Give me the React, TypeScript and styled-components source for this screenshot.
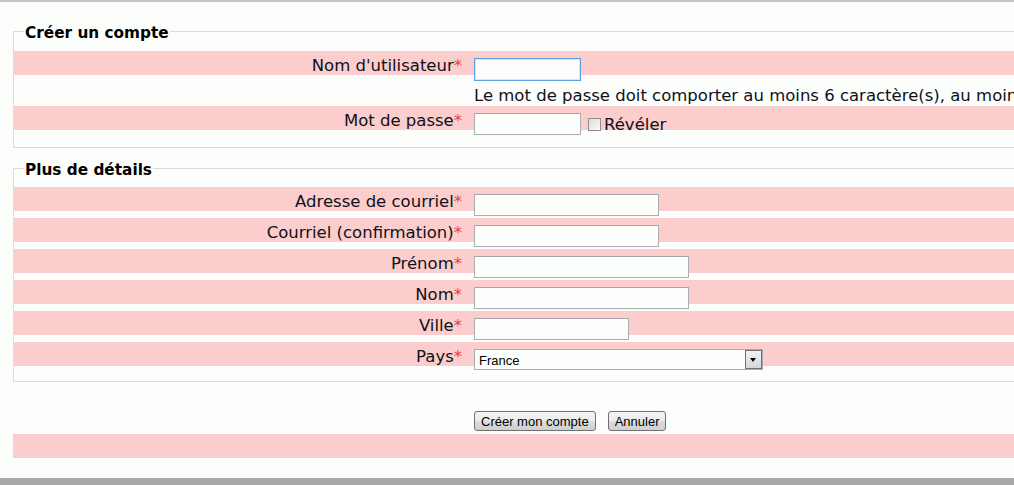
import styled, { createGlobalStyle } from "styled-components";

const GlobalStyle = createGlobalStyle`
  html, body {
    margin: 0;
    padding: 0;
    overflow: hidden;
    background: #fcfefc;
  }
  body {
    font-family: "DejaVu Sans", Verdana, sans-serif;
    color: #101018;
  }
`;

const Page = styled.div`
  width: 1060px;
  height: 485px;
  box-sizing: border-box;
  border-top: 2px solid #c4c4c4;
  border-bottom: 7px solid #a8a8a8;
  display: flex;
  flex-direction: column;
`;

const Fieldset = styled.fieldset<{ $top: number; $padTop: number; $padBottom: number }>`
  margin: ${(p) => p.$top}px 0 0 13px;
  padding: ${(p) => p.$padTop}px 0 ${(p) => p.$padBottom}px 0;
  border: 1px solid #dcdcdc;
  border-right: none;
  min-width: 0;
  display: flex;
  flex-direction: column;
  gap: 7px;
`;

const Legend = styled.legend`
  margin-left: 10px;
  padding: 4px 1px 0;
  font-size: 15.3px;
  line-height: 18px;
  font-weight: bold;
  color: #000;
`;

const Row = styled.div<{ $shade?: boolean; $h?: number }>`
  display: flex;
  align-items: flex-start;
  height: ${(p) => p.$h ?? 24}px;
  background: ${(p) => (p.$shade ? "#fccdcd" : "transparent")};
`;

const Group = styled.div`
  display: flex;
  flex-direction: column;
`;

const Label = styled.label`
  width: 448px;
  flex: none;
  text-align: right;
  font-size: 16.5px;
  line-height: 24px;
  padding-top: 3px;
  white-space: nowrap;
`;

const Required = styled.span`
  color: #f23a3a;
`;

const Field = styled.div`
  margin-left: 12px;
  margin-top: 7px;
  display: flex;
  align-items: center;
  gap: 3px;
`;

const TextInput = styled.input<{ $w: number; $focus?: boolean }>`
  box-sizing: border-box;
  width: ${(p) => p.$w}px;
  height: ${(p) => (p.$focus ? 23 : 22)}px;
  margin: 0;
  padding: 1px 3px;
  border: 1px solid ${(p) => (p.$focus ? "#5e9ee0" : "#abadb3")};
  border-top-color: ${(p) => (p.$focus ? "#5e9ee0" : "#a3a6ad")};
  box-shadow: ${(p) => (p.$focus ? "inset 0 0 0 1px #d4e6f8" : "none")};
  background: #fcfefc;
  font-family: Arial, "Liberation Sans", sans-serif;
  font-size: 13px;
  outline: none;
`;

const Hint = styled.div`
  margin-left: 460px;
  padding-top: 11px;
  font-size: 16.5px;
  line-height: 20px;
  white-space: nowrap;
`;

const CheckBox = styled.input`
  appearance: none;
  width: 13px;
  height: 13px;
  margin: 0 0 0 4px;
  box-sizing: border-box;
  border: 1px solid #8f8f8f;
  background: linear-gradient(135deg, #dcdcdc, #fbfbfb);
`;

const CheckText = styled.span`
  font-size: 16.5px;
  line-height: 20px;
  margin-top: 2px;
`;

const SelectBox = styled.div`
  position: relative;
  box-sizing: border-box;
  width: 289px;
  height: 21px;
  border: 1px solid #a5acb5;
  background: #fcfefc;
`;

const Select = styled.select`
  appearance: none;
  width: 100%;
  height: 100%;
  margin: 0;
  padding: 0 0 0 4px;
  border: none;
  background: transparent;
  font-family: Arial, "Liberation Sans", sans-serif;
  font-size: 13px;
  color: #000;
  outline: none;
`;

const Arrow = styled.span`
  position: absolute;
  right: 0;
  top: 0;
  box-sizing: border-box;
  width: 17px;
  height: 19px;
  border: 1px solid #6f6f6f;
  background: linear-gradient(#f3f3f3, #d6d6d6);
  pointer-events: none;
  &::after {
    content: "";
    position: absolute;
    left: 4px;
    top: 7px;
    border-left: 3.5px solid transparent;
    border-right: 3.5px solid transparent;
    border-top: 4px solid #000;
  }
`;

const Actions = styled.div`
  margin-top: 29px;
  padding-left: 474px;
  display: flex;
  gap: 12px;
`;

const Button = styled.button`
  box-sizing: border-box;
  height: 20px;
  margin: 0;
  padding: 0 6px;
  border: 1px solid #707070;
  border-radius: 3px;
  background: linear-gradient(#f4f4f4 0%, #ebebeb 50%, #dddddd 51%, #cfcfcf 100%);
  font-family: Arial, "Liberation Sans", sans-serif;
  font-size: 13px;
  color: #000;
`;

const Footer = styled.div`
  margin: 3px 0 0 13px;
  height: 24px;
  background: #fccdcd;
`;

type Item = { label: string; width: number };

const details: Item[] = [
  { label: "Adresse de courriel", width: 185 },
  { label: "Courriel (confirmation)", width: 185 },
  { label: "Prénom", width: 215 },
  { label: "Nom", width: 215 },
  { label: "Ville", width: 155 },
];

export default function App() {
  return (
    <>
      <GlobalStyle />
      <Page>
        <Fieldset $top={18} $padTop={9} $padBottom={17}>
          <Legend>Créer un compte</Legend>
          <Group>
            <Row $shade>
              <Label>
                Nom d'utilisateur<Required>*</Required>
              </Label>
              <Field>
                <TextInput $w={107} $focus />
              </Field>
            </Row>
            <Row $h={31}>
              <Hint>
                Le mot de passe doit comporter au moins 6 caractère(s), au moins 1 chiffre(s)
              </Hint>
            </Row>
            <Row $shade>
              <Label>
                Mot de passe<Required>*</Required>
              </Label>
              <Field>
                <TextInput $w={107} type="password" />
                <CheckBox type="checkbox" />
                <CheckText>Révéler</CheckText>
              </Field>
            </Row>
          </Group>
        </Fieldset>

        <Fieldset $top={9} $padTop={8} $padBottom={15}>
          <Legend>Plus de détails</Legend>
          {details.map((d) => (
            <Row key={d.label} $shade>
              <Label>
                {d.label}
                <Required>*</Required>
              </Label>
              <Field>
                <TextInput $w={d.width} />
              </Field>
            </Row>
          ))}
          <Row $shade>
            <Label>
              Pays<Required>*</Required>
            </Label>
            <Field>
              <SelectBox>
                <Select defaultValue="France">
                  <option>France</option>
                  <option>Belgique</option>
                  <option>Suisse</option>
                  <option>Canada</option>
                </Select>
                <Arrow />
              </SelectBox>
            </Field>
          </Row>
        </Fieldset>

        <Actions>
          <Button>Créer mon compte</Button>
          <Button>Annuler</Button>
        </Actions>
        <Footer />
      </Page>
    </>
  );
}
